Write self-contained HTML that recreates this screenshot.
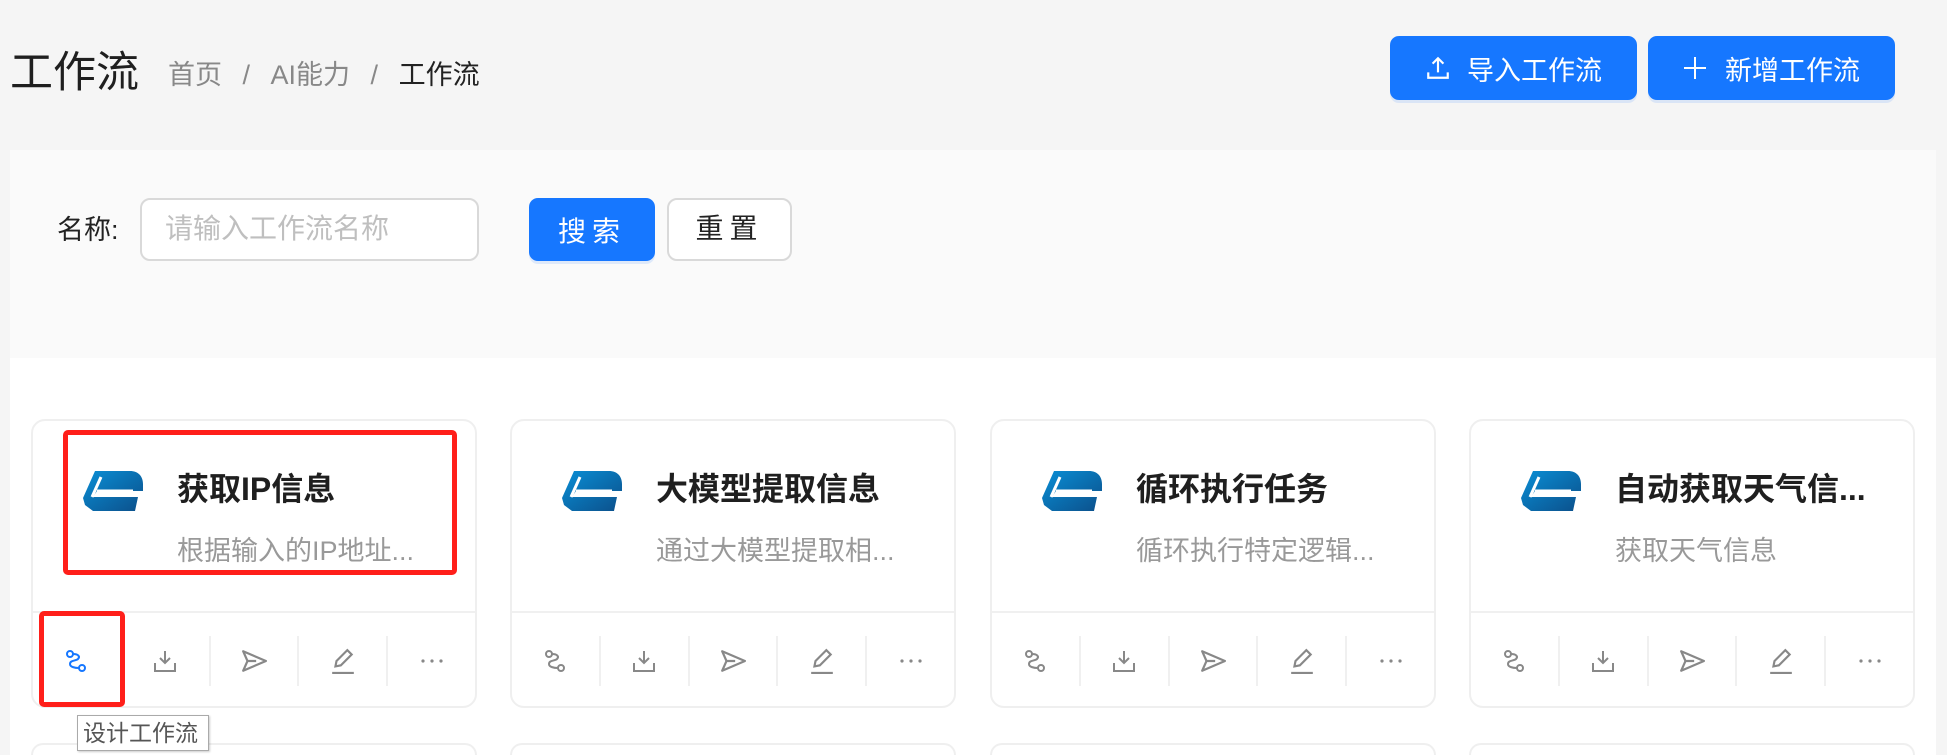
<!DOCTYPE html>
<html><head><meta charset="utf-8"><style>
*{box-sizing:border-box;margin:0;padding:0}
html{width:1947px;height:755px;overflow:hidden}
body{width:1947px;height:755px;overflow:hidden;background:#f5f5f5;font-family:"Liberation Sans","Noto Sans CJK SC",sans-serif;position:relative}
.abs{position:absolute}
.btn{position:absolute;background:#1677ff;color:#fff;border-radius:9px;font-size:27px;display:flex;align-items:center;justify-content:center;box-shadow:0 3px 0 rgba(22,119,255,.12)}
.card{position:absolute;top:419px;width:446px;height:289px;background:#fff;border:2px solid #efefef;border-radius:14px}
.card .logo{position:absolute;left:50px;top:50px}
.card .t{position:absolute;left:144px;top:47px;font-size:32px;font-weight:bold;color:#1f1f1f;white-space:nowrap;overflow:hidden;max-width:280px;line-height:42px}
.card .d{position:absolute;left:144px;top:111px;font-size:27px;color:#999;white-space:nowrap;line-height:38px}
.card .div{position:absolute;left:0;right:0;top:190px;border-top:2px solid #f0f0f0}
.card .acts{position:absolute;left:0;right:0;top:215px;height:50px;display:flex}
.card .acts div{flex:1;display:flex;align-items:center;justify-content:center;border-left:2px solid #f0f0f0}
.card .acts div:first-child{border-left:none}
.next{position:absolute;top:743px;width:446px;height:12px;background:#fff;border:2px solid #efefef;border-bottom:none;border-radius:14px 14px 0 0}
</style></head><body>
<div class="abs" style="left:10px;top:47px;font-size:43px;color:#1f1f1f;line-height:52px">工作流</div>
<div class="abs" style="left:168px;top:57px;font-size:27px;color:#888;line-height:36px;white-space:nowrap">首页 <span style="margin:0 13px">/</span> AI能力 <span style="margin:0 13px">/</span> <span style="color:#222">工作流</span></div>
<div class="btn" style="left:1390px;top:36px;width:247px;height:64px"><svg width="26" height="26" viewBox="0 0 24 24" fill="none" stroke="#fff" stroke-width="2"><path d="M12 3v13M7 8l5-5 5 5M3 16v5h18v-5"/></svg><span style="margin-left:16px">导入工作流</span></div>
<div class="btn" style="left:1648px;top:36px;width:247px;height:64px"><svg width="24" height="24" viewBox="0 0 24 24" stroke="#fff" stroke-width="2"><path d="M12 1v22M1 12h22"/></svg><span style="margin-left:18px">新增工作流</span></div>

<div class="abs" style="left:10px;top:150px;width:1926px;height:208px;background:#fafafa"></div>
<div class="abs" style="left:57px;top:212px;font-size:27px;color:#222;line-height:36px">名称:</div>
<div class="abs" style="left:140px;top:198px;width:339px;height:63px;background:#fff;border:2px solid #d9d9d9;border-radius:10px;font-size:28px;color:#bfbfbf;padding-left:23px;line-height:58px">请输入工作流名称</div>
<div class="btn" style="left:529px;top:198px;width:126px;height:63px;font-size:28px;letter-spacing:6px">搜索</div>
<div class="abs" style="left:667px;top:198px;width:125px;height:63px;background:#fff;border:2px solid #d9d9d9;border-radius:10px;font-size:28px;color:#222;text-align:center;line-height:58px;letter-spacing:6px">重置</div>

<div class="abs" style="left:10px;top:358px;width:1926px;height:397px;background:#fff"></div>

<svg width="0" height="0" style="position:absolute"><defs>
<linearGradient id="g" x1="0" y1="0" x2="1" y2="1"><stop offset="0" stop-color="#0a8fd6"/><stop offset="1" stop-color="#0b4f8a"/></linearGradient>
<symbol id="logo" viewBox="0 0 60 40"><path d="M12 0H47C55 0 60 5 60 13V20H14L10 26H55L52 40H10L2 34 0 27Z" fill="url(#g)"/><path d="M18 6L9 26M14 20H50" stroke="#fff" stroke-width="3" fill="none"/></symbol>
<symbol id="i1" viewBox="0 0 24 24"><g fill="none" stroke-width="2"><circle cx="6" cy="5" r="3"/><circle cx="18" cy="19" r="3"/><path d="M9 5c6 0 7 3 5 5-2 2-8 1-8 5 0 3 5 4 9 4"/></g></symbol>
<symbol id="i2" viewBox="0 0 24 24"><g fill="none" stroke="#888" stroke-width="2"><path d="M12 2v12M7 9l5 5 5-5M2 14v8h20v-8"/></g></symbol>
<symbol id="i3" viewBox="0 0 24 24"><path d="M2 3l21 9-21 9 4-9z M6 12h8" fill="none" stroke="#888" stroke-width="2" stroke-linejoin="round"/></symbol>
<symbol id="i4" viewBox="0 0 24 24"><g fill="none" stroke="#888" stroke-width="2"><path d="M5 17l1-5 10-10 4 4-10 10z"/><path d="M2 23h20"/></g></symbol>
<symbol id="i5" viewBox="0 0 24 24"><g fill="#888"><circle cx="3" cy="12" r="1.6"/><circle cx="12" cy="12" r="1.6"/><circle cx="21" cy="12" r="1.6"/></g></symbol>
</defs></svg>

<div class="card" style="left:31px"><svg class="logo" width="60" height="40"><use href="#logo"/></svg><div class="t">获取IP信息</div><div class="d">根据输入的IP地址...</div><div class="div"></div>
<div class="acts"><div><svg width="24" height="24" stroke="#1677ff"><use href="#i1"/></svg></div><div><svg width="24" height="24"><use href="#i2"/></svg></div><div><svg width="26" height="26"><use href="#i3"/></svg></div><div><svg width="26" height="26"><use href="#i4"/></svg></div><div><svg width="24" height="24"><use href="#i5"/></svg></div></div></div>
<div class="card" style="left:510px"><svg class="logo" width="60" height="40"><use href="#logo"/></svg><div class="t">大模型提取信息</div><div class="d">通过大模型提取相...</div><div class="div"></div>
<div class="acts"><div><svg width="24" height="24" stroke="#888"><use href="#i1"/></svg></div><div><svg width="24" height="24"><use href="#i2"/></svg></div><div><svg width="26" height="26"><use href="#i3"/></svg></div><div><svg width="26" height="26"><use href="#i4"/></svg></div><div><svg width="24" height="24"><use href="#i5"/></svg></div></div></div>
<div class="card" style="left:990px"><svg class="logo" width="60" height="40"><use href="#logo"/></svg><div class="t">循环执行任务</div><div class="d">循环执行特定逻辑...</div><div class="div"></div>
<div class="acts"><div><svg width="24" height="24" stroke="#888"><use href="#i1"/></svg></div><div><svg width="24" height="24"><use href="#i2"/></svg></div><div><svg width="26" height="26"><use href="#i3"/></svg></div><div><svg width="26" height="26"><use href="#i4"/></svg></div><div><svg width="24" height="24"><use href="#i5"/></svg></div></div></div>
<div class="card" style="left:1469px"><svg class="logo" width="60" height="40"><use href="#logo"/></svg><div class="t">自动获取天气信...</div><div class="d">获取天气信息</div><div class="div"></div>
<div class="acts"><div><svg width="24" height="24" stroke="#888"><use href="#i1"/></svg></div><div><svg width="24" height="24"><use href="#i2"/></svg></div><div><svg width="26" height="26"><use href="#i3"/></svg></div><div><svg width="26" height="26"><use href="#i4"/></svg></div><div><svg width="24" height="24"><use href="#i5"/></svg></div></div></div>

<div class="next" style="left:31px"></div><div class="next" style="left:510px"></div><div class="next" style="left:990px"></div><div class="next" style="left:1469px"></div>

<div class="abs" style="left:63px;top:430px;width:394px;height:145px;border:5px solid #ff1f1a;border-radius:5px"></div>
<div class="abs" style="left:39px;top:611px;width:86px;height:96px;border:5px solid #ff1f1a;border-radius:5px"></div>
<div class="abs" style="left:77px;top:715px;width:132px;height:36px;background:#fff;border:1px solid #aaa;box-shadow:1px 1px 2px rgba(0,0,0,.2);font-size:23px;color:#555;line-height:34px;padding-left:5px;white-space:nowrap;overflow:hidden">设计工作流</div>
</body></html>
